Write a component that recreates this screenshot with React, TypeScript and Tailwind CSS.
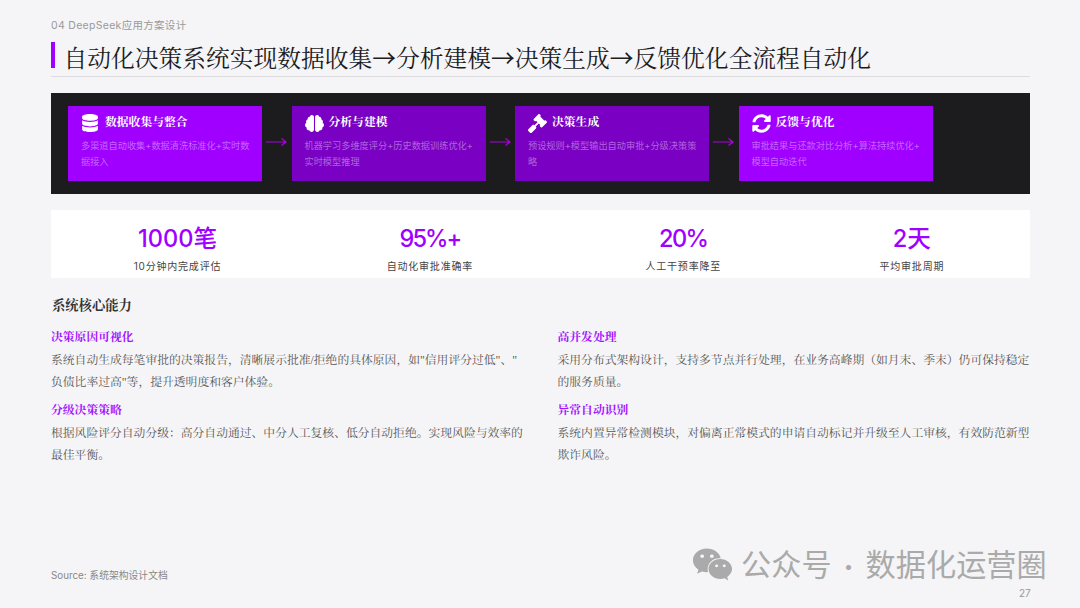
import React from "react";
import { FaDatabase, FaBrain, FaGavel, FaSyncAlt, FaWeixin } from "react-icons/fa";

const sans = "font-['Inter','Noto_Sans_CJK_SC',sans-serif]";
const serif = "font-['Liberation_Serif','Noto_Serif_CJK_SC','Noto_Sans_CJK_SC',serif]";

const steps = [
  { icon: <FaDatabase size={18} />, title: "数据收集与整合", text: "多渠道自动收集+数据清洗标准化+实时数据接入", bg: "bg-[#a000ff]", gap: "gap-[5px]" },
  { icon: <FaBrain size={19} />, title: "分析与建模", text: "机器学习多维度评分+历史数据训练优化+\u200b实时模型推理", bg: "bg-[#7a00c4]", gap: "gap-[4px]" },
  { icon: <FaGavel size={19} />, title: "决策生成", text: "预设规则+模型输出自动审批+分级决策策略", bg: "bg-[#7a00c4]", gap: "gap-[4px]" },
  { icon: <FaSyncAlt size={19} />, title: "反馈与优化", text: "审批结果与还款对比分析+算法持续优化+\u200b模型自动迭代", bg: "bg-[#a000ff]", gap: "gap-[4px]" },
];

const stats = [
  { v: "1000笔", l: "10分钟内完成评估", c: "", o: "" },
  { v: "95%+", l: "自动化审批准确率", c: "tracking-[-2px]", o: "" },
  { v: "20%", l: "人工干预率降至", c: "tracking-[-1.6px]", o: "ml-[7px] -mr-[7px]" },
  { v: "2天", l: "平均审批周期", c: "", o: "mr-[3px]" },
];

const left = [
  ["决策原因可视化", "系统自动生成每笔审批的决策报告，清晰展示批准/拒绝的具体原因，如\"信用评分过低\"、\"\u200b负债比率过高\"等，提升透明度和客户体验。"],
  ["分级决策策略", "根据风险评分自动分级：高分自动通过、中分人工复核、低分自动拒绝。实现风险与效率的最佳平衡。"],
];
const right = [
  ["高并发处理", "采用分布式架构设计，支持多节点并行处理，在业务高峰期（如月末、季末）仍可保持稳定的服务质量。"],
  ["异常自动识别", "系统内置异常检测模块，对偏离正常模式的申请自动标记并升级至人工审核，有效防范新型欺诈风险。"],
];

function Arrow() {
  return (
    <svg width="21" height="10" viewBox="0 0 21 10" fill="none" className="shrink-0 mb-[3px] text-[#b000e0]">
      <path d="M0 5H20M15.5 1.5L20 5L15.5 8.5" stroke="currentColor" strokeWidth="1.2" />
    </svg>
  );
}

function Column({ items }: { items: string[][] }) {
  return (
    <div className="flex flex-col gap-[5px]">
      {items.map(([h, t]) => (
        <div key={h}>
          <div className={`${serif} text-[11.8px] font-bold leading-[22px] text-[#a414ff]`}>{h}</div>
          <p className={`${serif} text-[11.8px] leading-[22.4px] text-[#555555] mt-[1px]`}>{t}</p>
        </div>
      ))}
    </div>
  );
}

const Ar = () => <span className="font-['Noto_Sans_CJK_SC',sans-serif]">→</span>;

export default function App() {
  return (
    <div className={`${sans} relative h-[608px] w-[1080px] overflow-hidden bg-[#f5f5f7] pl-[51px] pr-[50px] pt-[18px] flex flex-col`}>
      <div className="text-[10.5px] leading-[15px] tracking-[0.3px] text-[#999999]">04 DeepSeek应用方案设计</div>
      <div className="mt-[9px] h-[35px] border-b border-[#dddddf] flex items-start">
        <div className="h-[26px] w-[4px] bg-[#a000ff]" />
        <h1 className={`${serif} ml-[8.5px] text-[23.75px] leading-[30px] font-normal text-[#1c1c1e] whitespace-nowrap`}>
          自动化决策系统实现数据收集<Ar />分析建模<Ar />决策生成<Ar />反馈优化全流程自动化
        </h1>
      </div>

      <div className="mt-[16px] h-[101px] bg-[#1c1c1e] pl-[17px] pt-[13px] flex items-start">
        {steps.map((s, i) => (
          <React.Fragment key={s.title}>
            <div className={`${s.bg} h-[75px] w-[194px] shrink-0 pl-[13px] pr-[8px] pt-[7px]`}>
              <div className={`flex items-center ${s.gap} h-[20px] text-white`}>
                {s.icon}
                <span className={`${serif} text-[11.8px] font-bold ml-[1px]`}>{s.title}</span>
              </div>
              <p className="mt-[5px] text-[9.2px] leading-[15.5px] text-white/40">{s.text}</p>
            </div>
            {i < 3 && (
              <div className="w-[29.5px] h-[75px] flex items-center justify-center">
                <Arrow />
              </div>
            )}
          </React.Fragment>
        ))}
      </div>

      <div className="mt-[16px] h-[68px] bg-white flex justify-around items-start pt-[14px]">
        {stats.map((s) => (
          <div key={s.l} className={`flex flex-col items-center ${s.o}`}>
            <div className={`text-[23.6px] leading-[30px] font-medium text-[#a000ff] ${s.c}`}>{s.v}</div>
            <div className="mt-[5px] text-[10px] leading-[15px] tracking-[0.8px] text-[#444444]">{s.l}</div>
          </div>
        ))}
      </div>

      <h2 className={`${serif} mt-[18px] ml-[1px] text-[13.3px] leading-[20px] font-bold text-[#333333]`}>系统核心能力</h2>

      <div className="mt-[10px] grid grid-cols-2 gap-x-[34px]">
        <Column items={left} />
        <Column items={right} />
      </div>

      <div className="absolute left-[51px] top-[568px] text-[9.8px] leading-[15px] text-[#888888]">Source: 系统架构设计文档</div>
      <div className="absolute left-[1019px] top-[586px] text-[10px] leading-[14px] text-[#999999]">27</div>
      <div className="absolute left-[692px] top-[542px] flex items-center text-[#aaaaaa]">
        <FaWeixin size={41} />
        <span className="ml-[8px] text-[30.2px] leading-[42px] whitespace-nowrap font-['Noto_Sans_CJK_SC',sans-serif]">公众号<span className="mx-[5px] text-[24px]">·</span>数据化运营圈</span>
      </div>
    </div>
  );
}
